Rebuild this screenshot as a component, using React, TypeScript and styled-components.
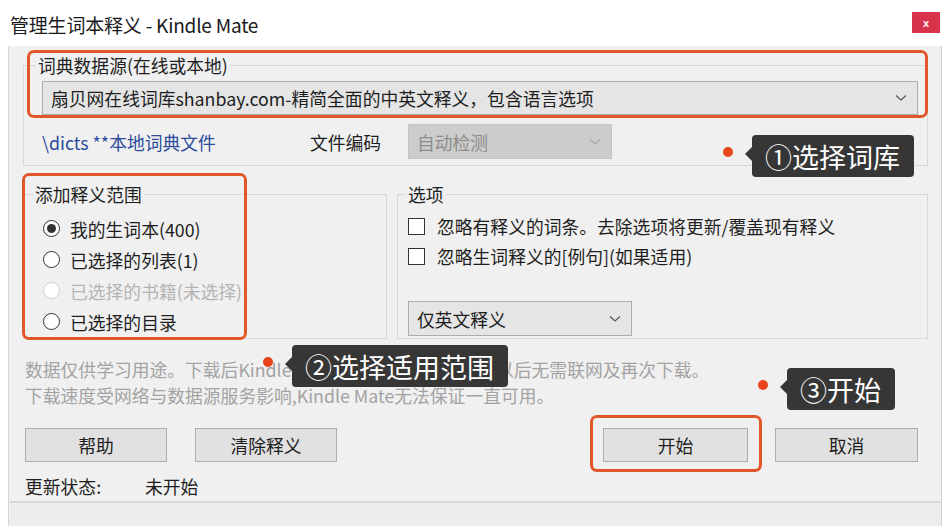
import React from "react";
import styled, { createGlobalStyle } from "styled-components";

const FONT = `"Noto Sans CJK SC", "Microsoft YaHei", "Noto Sans", sans-serif`;
const TEXT_SIZE = "17.8px";

const GlobalStyle = createGlobalStyle`
  html, body {
    margin: 0;
    padding: 0;
    background: #ffffff;
  }
  body {
    font-family: ${FONT};
    color: #1e1e1e;
  }
`;

const Page = styled.div`
  position: relative;
  width: 949px;
  height: 526px;
  overflow: hidden;
  background: #ffffff;
`;

const Window = styled.div`
  margin-left: 8px;
  width: 934px;
  height: 526px;
  display: flex;
  flex-direction: column;
`;

const TitleBar = styled.div`
  height: 46px;
  flex: none;
  display: flex;
  justify-content: space-between;
  align-items: flex-start;
  background: #ffffff;
  padding-left: 2px;
`;

const Title = styled.div`
  font-size: 19px;
  line-height: 50px;
  color: #1a1a1a;
  letter-spacing: -0.2px;
`;

const CloseButton = styled.div`
  flex: none;
  margin-top: 12px;
  margin-right: 2px;
  width: 28px;
  height: 21px;
  background: #d8334a;
  color: #ffffff;
  font-family: "Liberation Sans", sans-serif;
  font-size: 11px;
  font-weight: bold;
  display: flex;
  align-items: center;
  justify-content: center;
`;

const Body = styled.div`
  flex: 1;
  display: flex;
  flex-direction: column;
  background: #f0f0f0;
  border-left: 1px solid #d4d4d4;
  border-right: 1px solid #d4d4d4;
`;

const Content = styled.div`
  padding: 8px 13px 0 14px;
  display: flex;
  flex-direction: column;
`;

const GroupBox = styled.fieldset<{ $width?: number }>`
  margin: 0;
  min-width: 0;
  border: 1px solid #d9d9d9;
  ${({ $width }) => ($width ? `width: ${$width}px; flex: none;` : "flex: 1;")}
  box-sizing: border-box;
`;

// chrome places the legend after the fieldset's left padding, so each group pulls it back
const GroupTitle = styled.legend<{ $shift: number }>`
  padding: 0 2px;
  margin-left: ${({ $shift }) => $shift}px;
  font-size: ${TEXT_SIZE};
  line-height: 22px;
  color: #1e1e1e;
`;

const SourceGroup = styled(GroupBox)`
  padding: 5px 9px 6px 18px;
`;

const Combo = styled.div<{ $disabled?: boolean; $width?: number }>`
  box-sizing: border-box;
  height: ${({ $disabled }) => ($disabled ? 35 : 34)}px;
  ${({ $width }) => ($width ? `width: ${$width}px;` : "")}
  display: flex;
  align-items: center;
  justify-content: space-between;
  padding: 0 10px 0 8px;
  background: ${({ $disabled }) => ($disabled ? "#cccccc" : "#e5e5e5")};
  border: 1px solid ${({ $disabled }) => ($disabled ? "#c4c4c4" : "#acacac")};
  color: ${({ $disabled }) => ($disabled ? "#8c8c8c" : "#1e1e1e")};
  font-size: ${TEXT_SIZE};
  white-space: nowrap;
`;

const Chevron = ({ light }: { light?: boolean }) => (
  <svg width="12" height="8" viewBox="0 0 12 8">
    <path
      d="M1 1.5 L6 6 L11 1.5"
      fill="none"
      stroke={light ? "#a8a8a8" : "#555"}
      strokeWidth="1.2"
    />
  </svg>
);

const LocalRow = styled.div`
  display: flex;
  align-items: center;
  margin-top: 9px;
  font-size: ${TEXT_SIZE};
`;

const DictLink = styled.span`
  width: 268px;
  color: #2c4b9c;
`;

const FieldLabel = styled.span`
  width: 98px;
  color: #1e1e1e;
`;

const GroupsRow = styled.div`
  display: flex;
  gap: 10px;
  margin-top: 17px;
`;

const RangeGroup = styled(GroupBox)`
  padding: 8px 10px 1px 19px;
`;

const OptionGroup = styled(GroupBox)`
  padding: 6px 10px 2px 10px;
`;

const ChoiceRow = styled.div<{ $disabled?: boolean }>`
  height: 31px;
  display: flex;
  align-items: center;
  gap: 10px;
  font-size: ${TEXT_SIZE};
  color: ${({ $disabled }) => ($disabled ? "#b4b4b4" : "#1e1e1e")};
  white-space: nowrap;
`;

const CheckRow = styled(ChoiceRow)`
  height: 30px;
  gap: 12px;
`;

const RadioMark = styled.span<{ $checked?: boolean; $disabled?: boolean }>`
  box-sizing: border-box;
  width: 17px;
  height: 17px;
  border-radius: 50%;
  border: 1px solid ${({ $disabled }) => ($disabled ? "#cfcfcf" : "#333")};
  background: #ffffff;
  display: flex;
  align-items: center;
  justify-content: center;
  flex: none;
  &::after {
    content: "";
    width: 9px;
    height: 9px;
    border-radius: 50%;
    background: ${({ $checked }) => ($checked ? "#333" : "transparent")};
  }
`;

const CheckMark = styled.span`
  box-sizing: border-box;
  width: 17px;
  height: 17px;
  border: 1px solid #333;
  background: #ffffff;
  flex: none;
`;

const ModeCombo = styled(Combo)`
  margin-top: 30px;
  height: 35px;
`;

const Notes = styled.div`
  margin-top: 17px;
  padding-left: 2px;
  font-size: ${TEXT_SIZE};
  line-height: 26px;
  color: #a3a3a3;
  white-space: nowrap;
`;

const ButtonRow = styled.div`
  display: flex;
  justify-content: space-between;
  margin-top: 20px;
  padding: 0 10px 0 2px;
`;

const ButtonGroup = styled.div<{ $gap: number }>`
  display: flex;
  gap: ${({ $gap }) => $gap}px;
`;

const Button = styled.div<{ $width: number }>`
  box-sizing: border-box;
  width: ${({ $width }) => $width}px;
  height: 34px;
  background: #e1e1e1;
  border: 1px solid #adadad;
  display: flex;
  align-items: center;
  justify-content: center;
  font-size: ${TEXT_SIZE};
  color: #1e1e1e;
`;

const StatusLine = styled.div`
  margin-top: 11px;
  padding-left: 2px;
  display: flex;
  font-size: ${TEXT_SIZE};
  line-height: 26px;
  color: #1e1e1e;
`;

const StatusKey = styled.span`
  width: 120px;
`;

const StatusBar = styled.div`
  margin-top: 2px;
  flex: 1;
  margin-left: 1px;
  background: #ececec;
  border-top: 2px solid #d9d9d9;
`;

const Highlight = styled.div`
  position: absolute;
  box-sizing: border-box;
  border: 3px solid #e2572a;
  border-radius: 7px;
  pointer-events: none;
`;

const Callout = styled.div`
  position: absolute;
  display: flex;
  align-items: center;
`;

const CalloutDot = styled.span`
  width: 10px;
  height: 10px;
  margin-top: -8px;
  border-radius: 50%;
  background: #e8441e;
  flex: none;
`;

const CalloutBox = styled.div`
  position: relative;
  margin-left: 19px;
  height: 42px;
  padding: 0 14px 0 13px;
  display: flex;
  align-items: center;
  background: #363636;
  border-radius: 4px;
  color: #ffffff;
  font-size: 27px;
  white-space: nowrap;
  &::before {
    content: "";
    position: absolute;
    left: -7px;
    top: 50%;
    margin-top: -9px;
    border-top: 7px solid transparent;
    border-bottom: 7px solid transparent;
    border-right: 7px solid #363636;
  }
`;

export default function App() {
  return (
    <Page>
      <GlobalStyle />
      <Window>
        <TitleBar>
          <Title>管理生词本释义 - Kindle Mate</Title>
          <CloseButton>x</CloseButton>
        </TitleBar>
        <Body>
          <Content>
            <SourceGroup>
              <GroupTitle $shift={-6}>词典数据源(在线或本地)</GroupTitle>
              <Combo>
                <span>扇贝网在线词库shanbay.com-精简全面的中英文释义，包含语言选项</span>
                <Chevron />
              </Combo>
              <LocalRow>
                <DictLink>\dicts **本地词典文件</DictLink>
                <FieldLabel>文件编码</FieldLabel>
                <Combo $disabled $width={204}>
                  <span>自动检测</span>
                  <Chevron light />
                </Combo>
              </LocalRow>
            </SourceGroup>

            <GroupsRow>
              <RangeGroup $width={364}>
                <GroupTitle $shift={-10}>添加释义范围</GroupTitle>
                <ChoiceRow>
                  <RadioMark $checked />
                  我的生词本(400)
                </ChoiceRow>
                <ChoiceRow>
                  <RadioMark />
                  已选择的列表(1)
                </ChoiceRow>
                <ChoiceRow $disabled>
                  <RadioMark $disabled />
                  已选择的书籍(未选择)
                </ChoiceRow>
                <ChoiceRow>
                  <RadioMark />
                  已选择的目录
                </ChoiceRow>
              </RangeGroup>
              <OptionGroup>
                <GroupTitle $shift={-2}>选项</GroupTitle>
                <CheckRow>
                  <CheckMark />
                  忽略有释义的词条。去除选项将更新/覆盖现有释义
                </CheckRow>
                <CheckRow>
                  <CheckMark />
                  忽略生词释义的[例句](如果适用)
                </CheckRow>
                <ModeCombo $width={224}>
                  <span>仅英文释义</span>
                  <Chevron />
                </ModeCombo>
              </OptionGroup>
            </GroupsRow>

            <Notes>
              <div>数据仅供学习用途。下载后Kindle Mate会在本地保存释义，以后无需联网及再次下载。</div>
              <div>下载速度受网络与数据源服务影响,Kindle Mate无法保证一直可用。</div>
            </Notes>

            <ButtonRow>
              <ButtonGroup $gap={28}>
                <Button $width={142}>帮助</Button>
                <Button $width={142}>清除释义</Button>
              </ButtonGroup>
              <ButtonGroup $gap={27}>
                <Button $width={145}>开始</Button>
                <Button $width={143}>取消</Button>
              </ButtonGroup>
            </ButtonRow>

            <StatusLine>
              <StatusKey>更新状态:</StatusKey>
              <span>未开始</span>
            </StatusLine>
          </Content>
          <StatusBar />
        </Body>
      </Window>

      <Highlight style={{ left: 27, top: 50, width: 901, height: 68 }} />
      <Highlight style={{ left: 22, top: 173, width: 225, height: 167 }} />
      <Highlight style={{ left: 590, top: 415, width: 172, height: 57 }} />

      <Callout style={{ left: 723, top: 135 }}>
        <CalloutDot />
        <CalloutBox>①选择词库</CalloutBox>
      </Callout>
      <Callout style={{ left: 263, top: 345 }}>
        <CalloutDot />
        <CalloutBox>②选择适用范围</CalloutBox>
      </Callout>
      <Callout style={{ left: 758, top: 368 }}>
        <CalloutDot />
        <CalloutBox>③开始</CalloutBox>
      </Callout>
    </Page>
  );
}
